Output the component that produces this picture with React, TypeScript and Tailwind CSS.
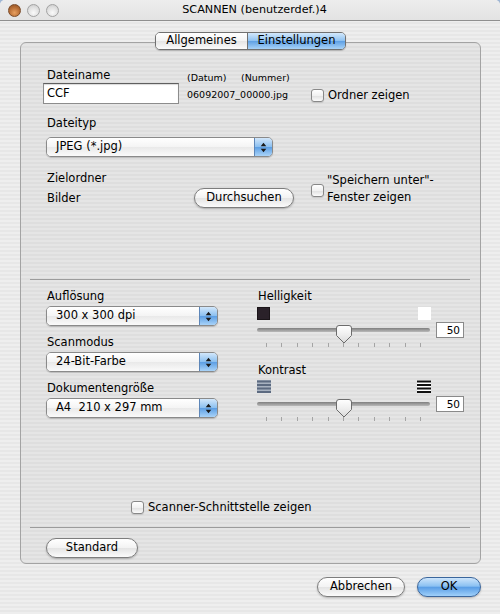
import React from "react";

const stripes =
  "bg-[repeating-linear-gradient(to_bottom,#eeeeee_0px,#eeeeee_2px,#e7e7e7_2px,#e7e7e7_4px)]";

function Check() {
  return (
    <span className="block w-[13px] h-[13px] shrink-0 rounded-[3px] border border-[#888888] bg-[linear-gradient(to_bottom,#ffffff,#f0f0f0_55%,#e2e2e2_56%,#fbfbfb)] shadow-[0_1px_1px_rgba(0,0,0,0.12)]" />
  );
}

function Arrows() {
  return (
    <svg width="7" height="11" viewBox="0 0 7 11">
      <path d="M3.5 0.8 L6.3 4.3 H0.7 Z M3.5 10.2 L6.3 6.7 H0.7 Z" fill="#1a1a1a" />
    </svg>
  );
}

function Select({ label, w }: { label: string; w: string }) {
  return (
    <div
      className={`flex h-[20px] ${w} rounded-[5px] border border-[#8a8a8a] overflow-hidden shadow-[0_1px_1px_rgba(0,0,0,0.18)]`}
    >
      <div className="flex-1 flex items-center pl-[9px] text-[11.5px] leading-none whitespace-pre bg-[linear-gradient(to_bottom,#ffffff,#f4f4f4_50%,#e9e9e9_51%,#fafafa)]">
        {label}
      </div>
      <div className="w-[18px] flex items-center justify-center border-l border-[#5d86b8] bg-[linear-gradient(to_bottom,#d2e7fb,#8cc0f0_48%,#5d9fe4_52%,#a9d3f8)]">
        <Arrows />
      </div>
    </div>
  );
}

function Btn({
  children,
  w,
  blue,
}: {
  children: React.ReactNode;
  w: string;
  blue?: boolean;
}) {
  return (
    <div
      className={`flex items-center justify-center h-[20px] ${w} rounded-full text-[11.5px] leading-none shadow-[0_1px_2px_rgba(0,0,0,0.25)] ${
        blue
          ? "border border-[#3b669c] bg-[linear-gradient(to_bottom,#cde5fb,#8bc1f2_45%,#5a9ee6_52%,#9fd0fa)]"
          : "border border-[#7d7d7d] bg-[linear-gradient(to_bottom,#ffffff,#f3f3f3_48%,#e4e4e4_52%,#fbfbfb)]"
      }`}
    >
      {children}
    </div>
  );
}

function Thumb() {
  return (
    <svg
      width="16"
      height="19"
      viewBox="0 0 16 19"
      className="absolute left-[79px] top-[3px]"
    >
      <defs>
        <linearGradient id="tg" x1="0" y1="0" x2="0" y2="1">
          <stop offset="0" stopColor="#ffffff" />
          <stop offset="0.5" stopColor="#efefef" />
          <stop offset="1" stopColor="#d9d9d9" />
        </linearGradient>
      </defs>
      <path
        d="M3 0.5 H13 Q15.5 0.5 15.5 3 V10.5 L8 18 L0.5 10.5 V3 Q0.5 0.5 3 0.5 Z"
        fill="url(#tg)"
        stroke="#6c6c6c"
      />
    </svg>
  );
}

function Slider() {
  return (
    <div className="flex items-start">
      <div className="relative w-[173px] h-[16px]">
        <div className="absolute left-0 right-0 top-[6px] h-[4px] rounded-full bg-[linear-gradient(to_bottom,#7f7f7f,#b9b9b9)]" />
        <Thumb />
      </div>
      <div className="ml-[6px] w-[28px] h-[16px] border border-[#8a8a8a] bg-white flex items-center justify-end pr-[3px] text-[10.5px] leading-none">
        50
      </div>
    </div>
  );
}

function Ticks() {
  return (
    <div className="w-[173px] px-[9px] flex justify-between">
      {Array.from({ length: 11 }).map((_, i) => (
        <span key={i} className="w-px h-[4px] bg-[#a4a4a4]" />
      ))}
    </div>
  );
}

function Bars({ color, gap }: { color: string; gap: string }) {
  return (
    <svg width="14" height="13" viewBox="0 0 14 13">
      <rect x="0" y="0" width="14" height="13" fill={gap} />
      <rect x="0" y="0.5" width="14" height="2" fill={color} />
      <rect x="0" y="4" width="14" height="2" fill={color} />
      <rect x="0" y="7.5" width="14" height="2" fill={color} />
      <rect x="0" y="11" width="14" height="2" fill={color} />
    </svg>
  );
}

export default function App() {
  return (
    <div className="w-[500px] h-[614px] bg-[#9fb6d4] font-['DejaVu_Sans',sans-serif] text-black">
      <div className={`w-[500px] h-[614px] rounded-t-[5px] overflow-hidden ${stripes} flex flex-col`}>
        {/* title bar */}
        <div className="relative h-[21px] shrink-0 border-b border-[#8f8f8f] bg-[linear-gradient(to_bottom,#ededed,#e3e3e3)] flex items-center pl-[8px]">
          <div className="flex gap-[6px]">
            <span className="w-[13px] h-[13px] rounded-full border border-[#7b4b28] bg-[radial-gradient(circle_at_50%_70%,#e8a060,#b36a33_60%,#8b4f26)]" />
            <span className="w-[13px] h-[13px] rounded-full border border-[#a2a2a2] bg-[radial-gradient(circle_at_50%_70%,#fafafa,#dedede_60%,#c4c4c4)]" />
            <span className="w-[13px] h-[13px] rounded-full border border-[#a2a2a2] bg-[radial-gradient(circle_at_50%_70%,#fafafa,#dedede_60%,#c4c4c4)]" />
          </div>
          <div className="flex-1 text-center text-[11.2px] leading-none pr-[56px] pl-[6px]">
            SCANNEN (benutzerdef.)4
          </div>
        </div>

        {/* body */}
        <div className="pl-[20px] pt-[11px] flex flex-col">
          {/* tabs */}
          <div className="relative z-10 -mb-[8px] flex justify-center w-[461px]">
            <div className="flex h-[18px] rounded-[5px] border border-[#707070] overflow-hidden shadow-[0_1px_1px_rgba(0,0,0,0.2)] text-[11.5px] leading-none">
              <div className="w-[92px] flex items-center justify-center bg-[linear-gradient(to_bottom,#ffffff,#f3f3f3_48%,#e5e5e5_52%,#fbfbfb)] border-r border-[#707070]">
                Allgemeines
              </div>
              <div className="w-[97px] flex items-center justify-center bg-[linear-gradient(to_bottom,#d3e8fb,#8fc2f1_48%,#5fa1e5_52%,#a8d3f8)]">
                Einstellungen
              </div>
            </div>
          </div>

          {/* panel */}
          <div className="w-[461px] h-[522px] rounded-[6px] border border-[#a3a3a3] bg-[rgba(0,0,0,0.035)] flex flex-col">
            {/* top section */}
            <div className="h-[236px] pl-[24px] pt-[25px] flex flex-col">
              <div className="flex items-start">
                <div className="w-[142px] flex flex-col">
                  <div className="text-[11.5px] leading-[14px] pl-[2px]">Dateiname</div>
                  <div className="mt-[1px] -ml-[2px] w-[136px] h-[21px] border border-[#8c8c8c] border-t-[#5f5f5f] bg-white shadow-[inset_0_1px_1px_rgba(0,0,0,0.15)] flex items-center pl-[3px] text-[11.5px]">
                    CCF
                  </div>
                </div>
                <div className="w-[124px] pt-[4px] flex flex-col text-[9.5px] leading-[12px]">
                  <div className="flex">
                    <span className="w-[54px]">(Datum)</span>
                    <span>(Nummer)</span>
                  </div>
                  <div className="mt-[5px]">06092007_00000.jpg</div>
                </div>
                <div className="pt-[20px] flex items-center gap-[4px]">
                  <Check />
                  <span className="text-[11.5px] leading-[14px]">Ordner zeigen</span>
                </div>
              </div>

              <div className="mt-[12px] text-[11.5px] leading-[14px] pl-[2px]">Dateityp</div>
              <div className="mt-[7px] ml-[1px]">
                <Select label="JPEG (*.jpg)" w="w-[227px]" />
              </div>

              <div className="mt-[14px] flex items-start">
                <div className="w-[149px] flex flex-col text-[11.5px] leading-[14px] pl-[2px]">
                  <span>Zielordner</span>
                  <span className="mt-[6px]">Bilder</span>
                </div>
                <div className="mt-[17px]">
                  <Btn w="w-[100px]">Durchsuchen</Btn>
                </div>
                <div className="ml-[17px] flex items-start">
                  <div className="mt-[13px]">
                    <Check />
                  </div>
                  <div className="ml-[3px] mt-[1px] text-[11.5px] leading-[17px]">
                    <div>"Speichern unter"-</div>
                    <div>Fenster zeigen</div>
                  </div>
                </div>
              </div>
            </div>

            <div className="ml-[9px] w-[440px] h-px bg-[#9c9c9c]" />

            {/* lower section */}
            <div className="h-[247px] flex flex-col pt-[9px] pb-[13px]">
              <div className="flex pl-[24px]">
                <div className="w-[212px] flex flex-col">
                  <div className="text-[11.5px] leading-[14px] pl-[2px]">Auflösung</div>
                  <div className="mt-[3px] ml-[1px]">
                    <Select label="300 x 300 dpi" w="w-[172px]" />
                  </div>
                  <div className="mt-[9px] text-[11.5px] leading-[14px] pl-[2px]">Scanmodus</div>
                  <div className="mt-[3px] ml-[1px]">
                    <Select label="24-Bit-Farbe" w="w-[172px]" />
                  </div>
                  <div className="mt-[9px] text-[11.5px] leading-[14px] pl-[2px]">
                    Dokumentengröße
                  </div>
                  <div className="mt-[3px] ml-[1px]">
                    <Select label="A4  210 x 297 mm" w="w-[172px]" />
                  </div>
                </div>

                <div className="w-[207px] flex flex-col">
                  <div className="text-[11.5px] leading-[14px] pl-[1px]">Helligkeit</div>
                  <div className="mt-[4px] w-[174px] flex justify-between">
                    <span className="w-[13px] h-[13px] bg-[#2a2129] border border-[#1a1418]" />
                    <span className="w-[13px] h-[13px] bg-white" />
                  </div>
                  <div className="mt-[2px]">
                    <Slider />
                  </div>
                  <div className="mt-[5px]">
                    <Ticks />
                  </div>

                  <div className="mt-[16px] text-[11.5px] leading-[14px] pl-[1px]">Kontrast</div>
                  <div className="mt-[3px] w-[174px] flex justify-between">
                    <Bars color="#5c6a80" gap="#a8b2c0" />
                    <Bars color="#111111" gap="#ffffff" />
                  </div>
                  <div className="mt-[3px]">
                    <Slider />
                  </div>
                  <div className="mt-[5px]">
                    <Ticks />
                  </div>
                </div>
              </div>

              <div className="mt-auto ml-[110px] flex items-center gap-[4px]">
                <Check />
                <span className="text-[11.5px] leading-[14px]">Scanner-Schnittstelle zeigen</span>
              </div>
            </div>

            <div className="ml-[9px] w-[440px] h-px bg-[#9c9c9c]" />

            <div className="pl-[25px] pt-[10px]">
              <Btn w="w-[92px]">Standard</Btn>
            </div>
          </div>

          {/* bottom buttons */}
          <div className="mt-[13px] w-[461px] flex justify-end gap-[12px]">
            <Btn w="w-[88px]">Abbrechen</Btn>
            <Btn w="w-[64px]" blue>
              OK
            </Btn>
          </div>
        </div>
      </div>
    </div>
  );
}
